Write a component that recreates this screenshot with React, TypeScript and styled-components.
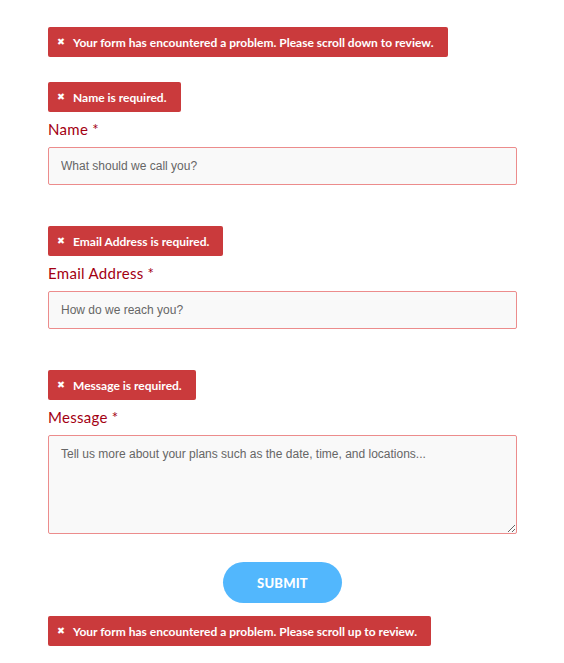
import React from "react";
import styled, { createGlobalStyle } from "styled-components";

const Global = createGlobalStyle`
  html, body { margin: 0; padding: 0; background: #fff; }
  body { font-family: "Lato", "Open Sans", sans-serif; }
  * { box-sizing: border-box; }
`;

const Page = styled.div`
  padding: 27px 0 0 48px;
  width: 517px;
  display: flex;
  flex-direction: column;
  align-items: flex-start;
`;

const Alert = styled.div<{ $mb?: number }>`
  display: inline-flex;
  align-items: center;
  height: 30px;
  padding: 0 14px 0 9px;
  background: #ca3a3c;
  color: #fff;
  border-radius: 2px;
  font-family: "Lato", sans-serif;
  font-weight: 700;
  font-size: 12px;
  margin-bottom: ${(p) => p.$mb ?? 6}px;
`;

const XIcon = styled.span`
  font-family: "DejaVu Sans", sans-serif;
  font-size: 9.5px;
  width: 16px;
  padding-left: 0px;
  margin-top: -2px;
`;

const Field = styled.div<{ $mb: number }>`
  display: flex;
  flex-direction: column;
  align-items: flex-start;
  width: 469px;
  margin-bottom: ${(p) => p.$mb}px;
`;

const Label = styled.label`
  font-family: "Lato", sans-serif;
  font-size: 15px;
  line-height: 22px;
  color: #a30012;
  margin-bottom: 6.5px;
  letter-spacing: 0.3px;
`;

const Star = styled.span`
  margin-left: 4px;
`;

const Input = styled.input`
  width: 469px;
  height: 38.5px;
  border: 1px solid #ec8c8c;
  border-radius: 2px;
  background: #f9f9f9;
  padding: 0 12px;
  font-family: "Liberation Sans", Arial, sans-serif;
  font-size: 12px;
  outline: none;
  &::placeholder { color: #666; }
`;

const TextArea = styled.textarea`
  width: 469px;
  height: 99px;
  border: 1px solid #ec8c8c;
  border-radius: 2px;
  background: #f9f9f9;
  padding: 11px 12px;
  font-family: "Liberation Sans", Arial, sans-serif;
  font-size: 12px;
  outline: none;
  display: block;
  &::placeholder { color: #666; }
`;

const ButtonRow = styled.div`
  width: 469px;
  display: flex;
  justify-content: center;
  margin-bottom: 13px;
`;

const Submit = styled.button`
  width: 119px;
  height: 41px;
  border: none;
  border-radius: 21px;
  background: #52b7fd;
  color: #fff;
  font-family: "Lato", sans-serif;
  font-weight: 900;
  font-size: 13px;
  letter-spacing: 0.2px;
`;

const ErrorAlert = ({ children, mb }: { children: React.ReactNode; mb?: number }) => (
  <Alert $mb={mb}>
    <XIcon>✖</XIcon>
    {children}
  </Alert>
);

export default function App() {
  return (
    <>
      <Global />
      <Page>
        <ErrorAlert mb={25}>Your form has encountered a problem. Please scroll down to review.</ErrorAlert>

        <ErrorAlert>Name is required.</ErrorAlert>
        <Field $mb={41}>
          <Label>
            Name<Star>*</Star>
          </Label>
          <Input placeholder="What should we call you?" />
        </Field>

        <ErrorAlert>Email Address is required.</ErrorAlert>
        <Field $mb={41}>
          <Label>
            Email Address<Star>*</Star>
          </Label>
          <Input placeholder="How do we reach you?" />
        </Field>

        <ErrorAlert>Message is required.</ErrorAlert>
        <Field $mb={28.5}>
          <Label>
            Message<Star>*</Star>
          </Label>
          <TextArea placeholder="Tell us more about your plans such as the date, time, and locations..." />
        </Field>

        <ButtonRow>
          <Submit>SUBMIT</Submit>
        </ButtonRow>

        <ErrorAlert mb={0}>Your form has encountered a problem. Please scroll up to review.</ErrorAlert>
      </Page>
    </>
  );
}
